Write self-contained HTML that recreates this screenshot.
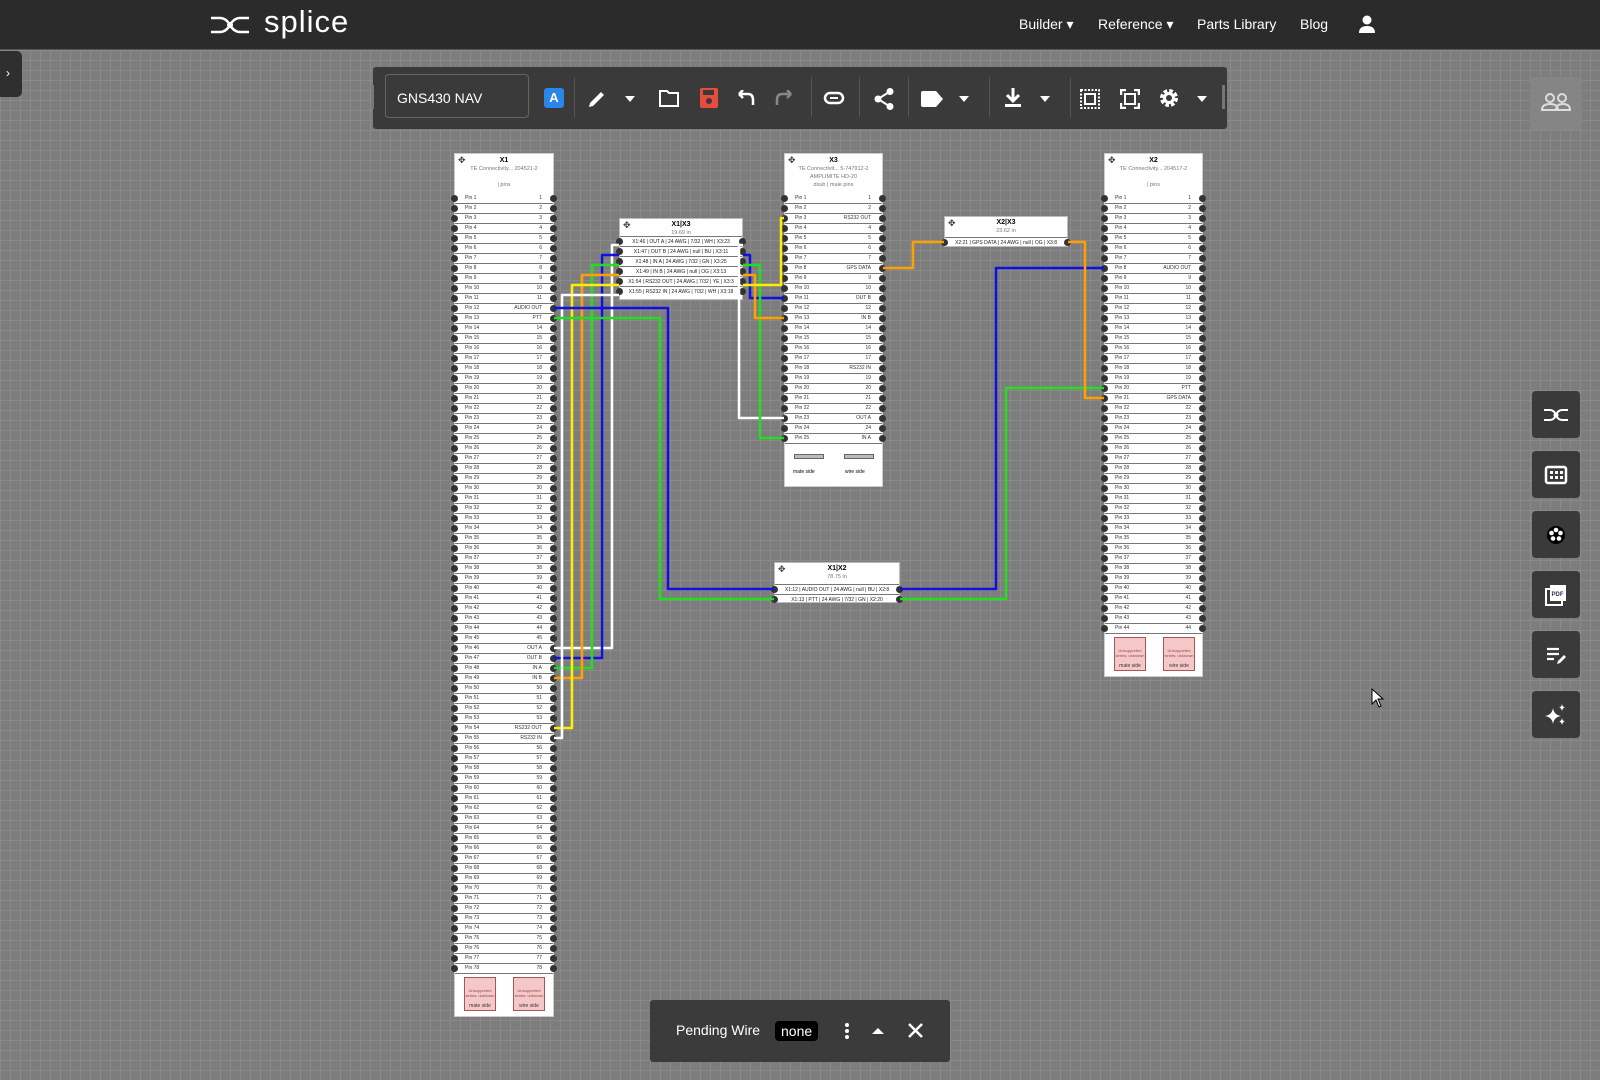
<!DOCTYPE html>
<html><head><meta charset="utf-8"><style>
*{box-sizing:border-box;margin:0;padding:0}
body{width:1600px;height:1080px;overflow:hidden;font-family:"Liberation Sans",sans-serif;background:#7d7d7d;position:relative;
background-image:linear-gradient(#8a8a8a 1px,transparent 1px),linear-gradient(90deg,#8a8a8a 1px,transparent 1px);background-size:10px 10px}
.nav{position:absolute;left:0;top:0;width:1600px;height:50px;background:#2b2b2b;border-bottom:1px solid #555}
.logo{position:absolute;left:210px;top:8px;color:#fff;font-size:30px;letter-spacing:1px}
.menu{position:absolute;top:16px;color:#fff;font-size:14px}
.tab{position:absolute;left:0;top:51px;width:22px;height:46px;background:#2f2f2f;border-radius:0 5px 5px 0;color:#fff;font-size:12px;padding:15px 0 0 6px}
.tb{position:absolute;left:373px;top:67px;width:854px;height:62px;background:#3a3a3a;border-radius:3px}
.name{position:absolute;left:12px;top:7px;width:144px;height:44px;border:1px solid #666;border-radius:4px;color:#fff;font-size:14px;padding:15px 0 0 11px}
.sep{position:absolute;top:10px;width:1px;height:40px;background:#555}
.tb svg{position:absolute}
.box{position:absolute;background:#fff;border:1px solid #ccc}
.hd{position:relative;text-align:center;font-size:5.5px;color:#777;line-height:8px}
.hd b{display:block;color:#000;font-size:7px;padding-top:3px}
.r{height:10px;border-bottom:1px solid #777;font-size:5px;line-height:9px;position:relative;padding:0 11px 0 10px;display:flex;justify-content:space-between;color:#333;background:#fff}
.r:before,.r:after{content:"";position:absolute;top:1px;width:7px;height:7px;border-radius:50%;background:#333}
.r:before{left:-4px}.r:after{right:-4px}
.ft{position:relative;height:42px}
.pk{position:absolute;top:3px;width:32px;height:34px;background:#f4c8c8;border:1px solid #a55;font-size:4px;color:#944;text-align:center;padding-top:10px}
.pk i{position:absolute;bottom:1px;left:0;right:0;font-style:normal;color:#333;font-size:5px}
.mv{position:absolute;left:3px;top:2px;font-size:9px;color:#333}
.cb{position:absolute;background:#fff;border:1px solid #bbb}
.cr{height:10px;font-size:5px;line-height:10px;text-align:center;border-top:1px solid #777;position:relative;color:#222}
.cr:before,.cr:after{content:"";position:absolute;top:1px;width:7px;height:7px;border-radius:50%;background:#333}
.cr:before{left:-4px}.cr:after{right:-4px}
.sb{position:absolute;left:1532px;width:48px;height:47px;background:#3a3a3a;border-radius:4px}
.sb svg{position:absolute;left:12px;top:12px}
.pend{position:absolute;left:650px;top:1000px;width:300px;height:62px;background:#3b3b3b;border-radius:3px;color:#fff;font-size:14px}
</style></head><body>
<div class="nav">
<svg style="position:absolute;left:210px;top:14px" width="40" height="22" viewBox="0 0 40 22"><path d="M1 4 H10 Q16 4 20 11 Q24 18 30 18 H39 M1 18 H10 Q16 18 20 11 Q24 4 30 4 H39" stroke="#fff" stroke-width="2.5" fill="none"/><circle cx="20" cy="11" r="3" fill="#fff"/></svg>
<div class="logo" style="left:264px;top:4px;font-size:31px">splice</div>
<div class="menu" style="left:1019px">Builder ▾</div>
<div class="menu" style="left:1098px">Reference ▾</div>
<div class="menu" style="left:1197px">Parts Library</div>
<div class="menu" style="left:1300px">Blog</div>
<svg style="position:absolute;left:1358px;top:15px" width="18" height="19" viewBox="0 0 18 19"><circle cx="9" cy="5" r="4.5" fill="#fff"/><path d="M1 18 Q1 11 9 11 Q17 11 17 18Z" fill="#fff"/></svg>
</div>
<div class="tab">›</div>
<div class="tb">
<div style="position:absolute;left:-2px;top:18px;width:3px;height:24px;background:#777"></div>
<div style="position:absolute;right:2px;top:18px;width:3px;height:24px;background:#777"></div>
<div class="name">GNS430 NAV</div>
<div style="position:absolute;left:171px;top:21px;width:20px;height:20px;background:#2a86e8;border-radius:3px;color:#fff;font-size:13px;text-align:center;line-height:20px;font-weight:bold">A</div>
<div class="sep" style="left:201px"></div>
<svg style="left:214px;top:22px" width="20" height="20" viewBox="0 0 20 20"><path d="M2 18 L3 14 L14 3 L17 6 L6 17Z" fill="#fff"/></svg>
<svg style="left:252px;top:29px" width="10" height="6"><path d="M0 0H10L5 6Z" fill="#fff"/></svg>
<svg style="left:286px;top:23px" width="20" height="17" viewBox="0 0 20 17"><path d="M1 1H8L10 3H19V16H1Z" fill="none" stroke="#fff" stroke-width="2"/></svg>
<svg style="left:327px;top:21px" width="18" height="20" viewBox="0 0 18 20"><rect x="0" y="0" width="18" height="20" rx="2" fill="#e74c3c"/><rect x="3" y="2" width="11" height="5" fill="#3a3a3a"/><circle cx="9" cy="13" r="3" fill="#3a3a3a"/></svg>
<svg style="left:362px;top:23px" width="20" height="16" viewBox="0 0 20 16"><path d="M4 4 H13 Q18 4 18 10 V15 M4 4 L8 0 M4 4 L8 8" fill="none" stroke="#fff" stroke-width="2.5"/></svg>
<svg style="left:402px;top:23px" width="20" height="16" viewBox="0 0 20 16"><path d="M16 4 H7 Q2 4 2 10 V15 M16 4 L12 0 M16 4 L12 8" fill="none" stroke="#888" stroke-width="2.5"/></svg>
<div class="sep" style="left:438px"></div>
<svg style="left:450px;top:23px" width="22" height="16" viewBox="0 0 22 16"><rect x="2" y="3" width="18" height="10" rx="5" fill="none" stroke="#fff" stroke-width="2.5"/><rect x="7" y="7" width="8" height="2" fill="#fff"/></svg>
<div class="sep" style="left:486px"></div>
<svg style="left:501px;top:21px" width="20" height="22" viewBox="0 0 20 22"><circle cx="16" cy="3.5" r="3.5" fill="#fff"/><circle cx="4" cy="11" r="3.5" fill="#fff"/><circle cx="16" cy="18.5" r="3.5" fill="#fff"/><path d="M16 3.5 L4 11 L16 18.5" stroke="#fff" stroke-width="2" fill="none"/></svg>
<div class="sep" style="left:535px"></div>
<svg style="left:548px;top:24px" width="22" height="16" viewBox="0 0 22 16"><path d="M0 2 Q0 0 2 0 H15 L22 8 L15 16 H2 Q0 16 0 14Z" fill="#fff"/></svg>
<svg style="left:586px;top:29px" width="10" height="6"><path d="M0 0H10L5 6Z" fill="#fff"/></svg>
<div class="sep" style="left:616px"></div>
<svg style="left:632px;top:21px" width="16" height="20" viewBox="0 0 16 20"><path d="M8 0 V12 M2 7 L8 13 L14 7" stroke="#fff" stroke-width="3" fill="none"/><rect x="0" y="16" width="16" height="3" fill="#fff"/></svg>
<svg style="left:667px;top:29px" width="10" height="6"><path d="M0 0H10L5 6Z" fill="#fff"/></svg>
<div class="sep" style="left:697px"></div>
<svg style="left:707px;top:22px" width="20" height="20" viewBox="0 0 20 20"><rect x="1" y="1" width="18" height="18" fill="none" stroke="#fff" stroke-width="2" stroke-dasharray="2 1.5"/><rect x="5" y="5" width="10" height="10" fill="none" stroke="#fff" stroke-width="2"/></svg>
<svg style="left:747px;top:22px" width="20" height="20" viewBox="0 0 20 20"><path d="M1 6V1H6M14 1H19V6M19 14V19H14M6 19H1V14" stroke="#fff" stroke-width="2.5" fill="none"/><rect x="5" y="5" width="10" height="10" fill="none" stroke="#fff" stroke-width="2"/></svg>
<svg style="left:785px;top:20px" width="22" height="22" viewBox="0 0 22 22"><circle cx="11" cy="11" r="7" fill="none" stroke="#fff" stroke-width="4" stroke-dasharray="3.5 2"/><circle cx="11" cy="11" r="6" fill="#fff"/><circle cx="11" cy="11" r="3" fill="#3a3a3a"/></svg>
<svg style="left:824px;top:29px" width="10" height="6"><path d="M0 0H10L5 6Z" fill="#fff"/></svg>
</div>
<svg style="position:absolute;left:1530px;top:77px" width="52" height="53"><rect width="52" height="53" rx="4" fill="#858585"/><circle cx="20" cy="21" r="4" fill="none" stroke="#ddd" stroke-width="2"/><circle cx="32" cy="21" r="4" fill="none" stroke="#ddd" stroke-width="2"/><path d="M12 33 Q12 27 20 27 Q28 27 28 33Z M26 33 Q26 27 33 27 Q40 27 40 33Z" fill="none" stroke="#ddd" stroke-width="2"/></svg>

<div class="sb" style="top:391px"><svg width="24" height="24" viewBox="0 0 24 24"><path d="M0 7 H6 Q10 7 12 12 Q14 17 18 17 H24 M0 17 H6 Q10 17 12 12 Q14 7 18 7 H24" stroke="#fff" stroke-width="2" fill="none"/><circle cx="12" cy="12" r="2.5" fill="#fff"/></svg></div>
<div class="sb" style="top:451px"><svg width="24" height="24" viewBox="0 0 24 24"><rect x="2" y="4" width="20" height="16" rx="2" fill="none" stroke="#fff" stroke-width="2.5"/><g fill="#fff"><rect x="6" y="8" width="3" height="3"/><rect x="11" y="8" width="3" height="3"/><rect x="16" y="8" width="3" height="3"/><rect x="6" y="13" width="3" height="3"/><rect x="11" y="13" width="3" height="3"/><rect x="16" y="13" width="3" height="3"/></g></svg></div>
<div class="sb" style="top:511px"><svg width="24" height="24" viewBox="0 0 24 24"><circle cx="12" cy="12" r="9" fill="#000"/><g fill="#fff"><circle cx="12" cy="7" r="2.3"/><circle cx="16.5" cy="10" r="2.3"/><circle cx="15" cy="15.5" r="2.3"/><circle cx="9" cy="15.5" r="2.3"/><circle cx="7.5" cy="10" r="2.3"/></g></svg></div>
<div class="sb" style="top:571px"><svg width="24" height="24" viewBox="0 0 24 24"><rect x="2" y="6" width="16" height="16" fill="none" stroke="#fff" stroke-width="2"/><rect x="6" y="2" width="16" height="16" fill="#fff"/><text x="7.5" y="13" font-size="6" font-family="Liberation Sans" font-weight="bold" fill="#335">PDF</text></svg></div>
<div class="sb" style="top:631px"><svg width="24" height="24" viewBox="0 0 24 24"><path d="M3 6H15M3 11H15M3 16H10" stroke="#fff" stroke-width="2.2"/><path d="M13 21 L14 18 L20 12 L22 14 L16 20Z" fill="#fff"/></svg></div>
<div class="sb" style="top:691px"><svg width="24" height="24" viewBox="0 0 24 24" fill="#fff"><path d="M9 5 Q10 12 17 13 Q10 14 9 21 Q8 14 1 13 Q8 12 9 5Z"/><path d="M18 1 Q18.5 4 21 4.5 Q18.5 5 18 8 Q17.5 5 15 4.5 Q17.5 4 18 1Z"/><path d="M18 15 Q18.5 18 21 18.5 Q18.5 19 18 22 Q17.5 19 15 18.5 Q17.5 18 18 15Z"/></svg></div>

<!-- X1 -->
<div class="box" style="left:454px;top:153px;width:100px">
<div class="hd" style="height:40px"><span class="mv">✥</span><b>X1</b>TE Connectivity... 204521-2<br><br>| pins</div>
<div class="r"><span>Pin 1</span><span>1</span></div><div class="r"><span>Pin 2</span><span>2</span></div><div class="r"><span>Pin 3</span><span>3</span></div><div class="r"><span>Pin 4</span><span>4</span></div><div class="r"><span>Pin 5</span><span>5</span></div><div class="r"><span>Pin 6</span><span>6</span></div><div class="r"><span>Pin 7</span><span>7</span></div><div class="r"><span>Pin 8</span><span>8</span></div><div class="r"><span>Pin 9</span><span>9</span></div><div class="r"><span>Pin 10</span><span>10</span></div>
<div class="r"><span>Pin 11</span><span>11</span></div><div class="r"><span>Pin 12</span><span>AUDIO OUT</span></div><div class="r"><span>Pin 13</span><span>PTT</span></div><div class="r"><span>Pin 14</span><span>14</span></div><div class="r"><span>Pin 15</span><span>15</span></div><div class="r"><span>Pin 16</span><span>16</span></div><div class="r"><span>Pin 17</span><span>17</span></div><div class="r"><span>Pin 18</span><span>18</span></div><div class="r"><span>Pin 19</span><span>19</span></div><div class="r"><span>Pin 20</span><span>20</span></div>
<div class="r"><span>Pin 21</span><span>21</span></div><div class="r"><span>Pin 22</span><span>22</span></div><div class="r"><span>Pin 23</span><span>23</span></div><div class="r"><span>Pin 24</span><span>24</span></div><div class="r"><span>Pin 25</span><span>25</span></div><div class="r"><span>Pin 26</span><span>26</span></div><div class="r"><span>Pin 27</span><span>27</span></div><div class="r"><span>Pin 28</span><span>28</span></div><div class="r"><span>Pin 29</span><span>29</span></div><div class="r"><span>Pin 30</span><span>30</span></div>
<div class="r"><span>Pin 31</span><span>31</span></div><div class="r"><span>Pin 32</span><span>32</span></div><div class="r"><span>Pin 33</span><span>33</span></div><div class="r"><span>Pin 34</span><span>34</span></div><div class="r"><span>Pin 35</span><span>35</span></div><div class="r"><span>Pin 36</span><span>36</span></div><div class="r"><span>Pin 37</span><span>37</span></div><div class="r"><span>Pin 38</span><span>38</span></div><div class="r"><span>Pin 39</span><span>39</span></div><div class="r"><span>Pin 40</span><span>40</span></div>
<div class="r"><span>Pin 41</span><span>41</span></div><div class="r"><span>Pin 42</span><span>42</span></div><div class="r"><span>Pin 43</span><span>43</span></div><div class="r"><span>Pin 44</span><span>44</span></div><div class="r"><span>Pin 45</span><span>45</span></div><div class="r"><span>Pin 46</span><span>OUT A</span></div><div class="r"><span>Pin 47</span><span>OUT B</span></div><div class="r"><span>Pin 48</span><span>IN A</span></div><div class="r"><span>Pin 49</span><span>IN B</span></div><div class="r"><span>Pin 50</span><span>50</span></div>
<div class="r"><span>Pin 51</span><span>51</span></div><div class="r"><span>Pin 52</span><span>52</span></div><div class="r"><span>Pin 53</span><span>53</span></div><div class="r"><span>Pin 54</span><span>RS232 OUT</span></div><div class="r"><span>Pin 55</span><span>RS232 IN</span></div><div class="r"><span>Pin 56</span><span>56</span></div><div class="r"><span>Pin 57</span><span>57</span></div><div class="r"><span>Pin 58</span><span>58</span></div><div class="r"><span>Pin 59</span><span>59</span></div><div class="r"><span>Pin 60</span><span>60</span></div>
<div class="r"><span>Pin 61</span><span>61</span></div><div class="r"><span>Pin 62</span><span>62</span></div><div class="r"><span>Pin 63</span><span>63</span></div><div class="r"><span>Pin 64</span><span>64</span></div><div class="r"><span>Pin 65</span><span>65</span></div><div class="r"><span>Pin 66</span><span>66</span></div><div class="r"><span>Pin 67</span><span>67</span></div><div class="r"><span>Pin 68</span><span>68</span></div><div class="r"><span>Pin 69</span><span>69</span></div><div class="r"><span>Pin 70</span><span>70</span></div>
<div class="r"><span>Pin 71</span><span>71</span></div><div class="r"><span>Pin 72</span><span>72</span></div><div class="r"><span>Pin 73</span><span>73</span></div><div class="r"><span>Pin 74</span><span>74</span></div><div class="r"><span>Pin 75</span><span>75</span></div><div class="r"><span>Pin 76</span><span>76</span></div><div class="r"><span>Pin 77</span><span>77</span></div><div class="r"><span>Pin 78</span><span>78</span></div>
<div class="ft"><div class="pk" style="left:9px">Unsupported series: unknown<i>mate side</i></div><div class="pk" style="left:58px">Unsupported series: unknown<i>wire side</i></div></div>
</div>

<!-- X3 -->
<div class="box" style="left:784px;top:153px;width:99px">
<div class="hd" style="height:40px"><span class="mv">✥</span><b>X3</b>TE Connectivit... 5-747912-2<br>AMPLIMITE HD-20<br>dsub | male pins</div>
<div class="r"><span>Pin 1</span><span>1</span></div><div class="r"><span>Pin 2</span><span>2</span></div><div class="r"><span>Pin 3</span><span>RS232 OUT</span></div><div class="r"><span>Pin 4</span><span>4</span></div><div class="r"><span>Pin 5</span><span>5</span></div><div class="r"><span>Pin 6</span><span>6</span></div><div class="r"><span>Pin 7</span><span>7</span></div><div class="r"><span>Pin 8</span><span>GPS DATA</span></div><div class="r"><span>Pin 9</span><span>9</span></div><div class="r"><span>Pin 10</span><span>10</span></div>
<div class="r"><span>Pin 11</span><span>OUT B</span></div><div class="r"><span>Pin 12</span><span>12</span></div><div class="r"><span>Pin 13</span><span>IN B</span></div><div class="r"><span>Pin 14</span><span>14</span></div><div class="r"><span>Pin 15</span><span>15</span></div><div class="r"><span>Pin 16</span><span>16</span></div><div class="r"><span>Pin 17</span><span>17</span></div><div class="r"><span>Pin 18</span><span>RS232 IN</span></div><div class="r"><span>Pin 19</span><span>19</span></div><div class="r"><span>Pin 20</span><span>20</span></div>
<div class="r"><span>Pin 21</span><span>21</span></div><div class="r"><span>Pin 22</span><span>22</span></div><div class="r"><span>Pin 23</span><span>OUT A</span></div><div class="r"><span>Pin 24</span><span>24</span></div><div class="r"><span>Pin 25</span><span>IN A</span></div>
<div class="ft"><div style="position:absolute;left:9px;top:10px;width:30px;height:5px;background:#bbb;border:1px solid #666"></div><div style="position:absolute;left:59px;top:10px;width:30px;height:5px;background:#bbb;border:1px solid #666"></div><div style="position:absolute;left:8px;top:25px;font-size:5px">mate side</div><div style="position:absolute;left:60px;top:25px;font-size:5px">wire side</div></div>
</div>

<!-- X2 -->
<div class="box" style="left:1104px;top:153px;width:99px">
<div class="hd" style="height:40px"><span class="mv">✥</span><b>X2</b>TE Connectivity... 204517-2<br><br>| pins</div>
<div class="r"><span>Pin 1</span><span>1</span></div><div class="r"><span>Pin 2</span><span>2</span></div><div class="r"><span>Pin 3</span><span>3</span></div><div class="r"><span>Pin 4</span><span>4</span></div><div class="r"><span>Pin 5</span><span>5</span></div><div class="r"><span>Pin 6</span><span>6</span></div><div class="r"><span>Pin 7</span><span>7</span></div><div class="r"><span>Pin 8</span><span>AUDIO OUT</span></div><div class="r"><span>Pin 9</span><span>9</span></div><div class="r"><span>Pin 10</span><span>10</span></div>
<div class="r"><span>Pin 11</span><span>11</span></div><div class="r"><span>Pin 12</span><span>12</span></div><div class="r"><span>Pin 13</span><span>13</span></div><div class="r"><span>Pin 14</span><span>14</span></div><div class="r"><span>Pin 15</span><span>15</span></div><div class="r"><span>Pin 16</span><span>16</span></div><div class="r"><span>Pin 17</span><span>17</span></div><div class="r"><span>Pin 18</span><span>18</span></div><div class="r"><span>Pin 19</span><span>19</span></div><div class="r"><span>Pin 20</span><span>PTT</span></div>
<div class="r"><span>Pin 21</span><span>GPS DATA</span></div><div class="r"><span>Pin 22</span><span>22</span></div><div class="r"><span>Pin 23</span><span>23</span></div><div class="r"><span>Pin 24</span><span>24</span></div><div class="r"><span>Pin 25</span><span>25</span></div><div class="r"><span>Pin 26</span><span>26</span></div><div class="r"><span>Pin 27</span><span>27</span></div><div class="r"><span>Pin 28</span><span>28</span></div><div class="r"><span>Pin 29</span><span>29</span></div><div class="r"><span>Pin 30</span><span>30</span></div>
<div class="r"><span>Pin 31</span><span>31</span></div><div class="r"><span>Pin 32</span><span>32</span></div><div class="r"><span>Pin 33</span><span>33</span></div><div class="r"><span>Pin 34</span><span>34</span></div><div class="r"><span>Pin 35</span><span>35</span></div><div class="r"><span>Pin 36</span><span>36</span></div><div class="r"><span>Pin 37</span><span>37</span></div><div class="r"><span>Pin 38</span><span>38</span></div><div class="r"><span>Pin 39</span><span>39</span></div><div class="r"><span>Pin 40</span><span>40</span></div>
<div class="r"><span>Pin 41</span><span>41</span></div><div class="r"><span>Pin 42</span><span>42</span></div><div class="r"><span>Pin 43</span><span>43</span></div><div class="r"><span>Pin 44</span><span>44</span></div>
<div class="ft"><div class="pk" style="left:9px">Unsupported series: unknown<i>mate side</i></div><div class="pk" style="left:58px">Unsupported series: unknown<i>wire side</i></div></div>
</div>

<!-- cables -->
<div class="cb" style="left:619px;top:218px;width:124px;height:82px">
<div class="hd" style="height:17px"><span class="mv">✥</span><b style="padding-top:2px">X1|X3</b>19.69 in</div>
<div class="cr">X1:46 | OUT A | 24 AWG | 7/32 | WH | X3:23</div>
<div class="cr">X1:47 | OUT B | 24 AWG | null | BU | X3:11</div>
<div class="cr">X1:48 | IN A | 24 AWG | 7/32 | GN | X3:25</div>
<div class="cr">X1:49 | IN B | 24 AWG | null | OG | X3:13</div>
<div class="cr">X1:54 | RS232 OUT | 24 AWG | 7/32 | YE | X3:3</div>
<div class="cr">X1:55 | RS232 IN | 24 AWG | 7/32 | WH | X3:18</div>
</div>
<div class="cb" style="left:944px;top:216px;width:124px;height:31px">
<div class="hd" style="height:20px"><span class="mv">✥</span><b style="padding-top:2px">X2|X3</b>23.62 in</div>
<div class="cr">X2:21 | GPS DATA | 24 AWG | null | OG | X3:8</div>
</div>
<div class="cb" style="left:774px;top:562px;width:126px;height:41px">
<div class="hd" style="height:21px"><span class="mv">✥</span><b style="padding-top:2px">X1|X2</b>78.75 in</div>
<div class="cr">X1:12 | AUDIO OUT | 24 AWG | null | BU | X2:8</div>
<div class="cr">X1:13 | PTT | 24 AWG | 7/32 | GN | X2:20</div>
</div>

<svg style="position:absolute;left:0;top:0" width="1600" height="1080" fill="none" stroke-width="2.5" stroke-linejoin="round">
<path d="M554 648 H612 V245 H619" stroke="#fff"/>
<path d="M554 658 H602 V255 H619" stroke="#1010e0"/>
<path d="M554 668 H592 V265 H619" stroke="#22dd22"/>
<path d="M554 678 H582 V275 H619" stroke="#ffa000"/>
<path d="M554 728 H572 V285 H619" stroke="#ffee00"/>
<path d="M554 738 H562 V295 H619" stroke="#fff"/>
<path d="M743 245 H739 V418 H784" stroke="#fff"/>
<path d="M743 255 H750 V298 H784" stroke="#1010e0"/>
<path d="M743 265 H760 V438 H784" stroke="#22dd22"/>
<path d="M743 275 H755 V318 H784" stroke="#ffa000"/>
<path d="M743 285 H781 V218 H784" stroke="#ffee00"/>
<path d="M554 308 H668 V589 H774" stroke="#1010e0"/>
<path d="M554 318 H660 V599 H774" stroke="#22dd22"/>
<path d="M900 589 H996 V268 H1104" stroke="#1010e0"/>
<path d="M900 599 H1006 V388 H1104" stroke="#22dd22"/>
<path d="M883 268 H913 V242 H944" stroke="#ffa000"/>
<path d="M1068 242 H1085 V398 H1104" stroke="#ffa000"/>
</svg>

<svg style="position:absolute;left:1371px;top:688px" width="14" height="20" viewBox="0 0 14 20"><path d="M1 1 V16 L5 12 L8 19 L10 18 L7 11 H12Z" fill="#fff" stroke="#000" stroke-width="1"/></svg>

<div class="pend">
<div style="position:absolute;left:26px;top:22px">Pending Wire</div>
<div style="position:absolute;left:125px;top:21px;background:#000;border-radius:4px;padding:2px 6px">none</div>
<svg style="position:absolute;left:194px;top:22px" width="6" height="18"><circle cx="3" cy="3" r="2" fill="#fff"/><circle cx="3" cy="9" r="2" fill="#fff"/><circle cx="3" cy="15" r="2" fill="#fff"/></svg>
<svg style="position:absolute;left:222px;top:27px" width="12" height="7"><path d="M0 7L6 1L12 7Z" fill="#fff"/></svg>
<svg style="position:absolute;left:258px;top:23px" width="15" height="15"><path d="M1 1L14 14M14 1L1 14" stroke="#fff" stroke-width="2.5"/></svg>
</div>
</body></html>
